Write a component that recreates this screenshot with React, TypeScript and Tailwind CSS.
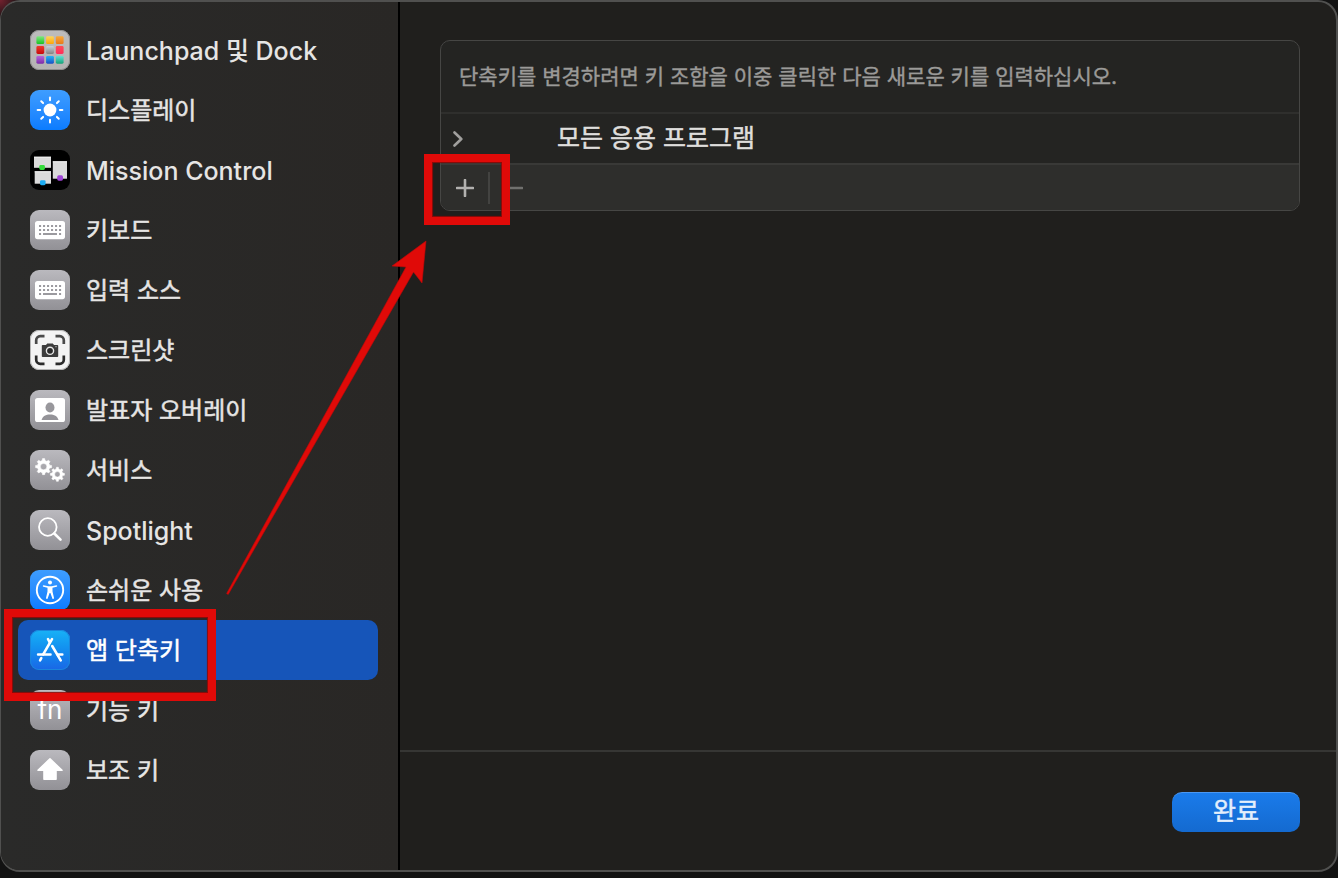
import { useState, type ReactNode } from "react";

function gearPath(cx: number, cy: number, outer: number, inner: number, hole: number) {
  const teeth = 8;
  const step = (Math.PI * 2) / teeth;
  const at = (r: number, a: number) =>
    `${(cx + r * Math.cos(a)).toFixed(2)} ${(cy + r * Math.sin(a)).toFixed(2)}`;
  const points: string[] = [];
  for (let i = 0; i < teeth; i++) {
    const a = i * step;
    points.push(
      at(inner, a - step * 0.3),
      at(outer, a - step * 0.17),
      at(outer, a + step * 0.17),
      at(inner, a + step * 0.3),
    );
  }
  return (
    `M${points.join("L")}Z` +
    `M${cx - hole} ${cy}a${hole} ${hole} 0 1 0 ${hole * 2} 0a${hole} ${hole} 0 1 0 ${-hole * 2} 0Z`
  );
}

const grayTile = "bg-linear-to-b from-[#bab9be] to-[#929196]";
const blueTile = "bg-linear-to-b from-[#3e9dff] to-[#0a7cff]";

function Tile({ className, children }: { className: string; children: ReactNode }) {
  return (
    <span className={`size-10 shrink-0 overflow-hidden rounded-[9px] ${className}`}>
      <svg viewBox="0 0 40 40" className="size-full" aria-hidden="true">
        {children}
      </svg>
    </span>
  );
}

const launchpadColors: [string, string][] = [
  ["#7ee87e", "#18c322"],
  ["#ffd65a", "#fba50a"],
  ["#f9a83a", "#e8791a"],
  ["#f0372c", "#c80c0c"],
  ["#c5ced8", "#858585"],
  ["#ff4a55", "#ff2d5c"],
  ["#b866dd", "#7c2ba8"],
  ["#22b8f5", "#1a4fc4"],
  ["#5fe0d6", "#17a377"],
];

function LaunchpadIcon() {
  return (
    <Tile className="bg-linear-to-b from-[#bdbcbc] to-[#b5b3b3] shadow-[inset_0_0_0_1px_#8f8e8e]">
      <defs>
        {launchpadColors.map(([from, to], i) => (
          <linearGradient key={i} id={`pad${i}`} x1="0" y1="0" x2="0" y2="1">
            <stop offset="0" stopColor={from} />
            <stop offset="1" stopColor={to} />
          </linearGradient>
        ))}
      </defs>
      {launchpadColors.map((_, i) => (
        <rect
          key={i}
          x={6.4 + (i % 3) * 9.7}
          y={6.3 + Math.floor(i / 3) * 9.8}
          width="7.8"
          height="7.8"
          rx="1.4"
          fill={`url(#pad${i})`}
        />
      ))}
    </Tile>
  );
}

function DisplayIcon() {
  return (
    <Tile className={blueTile}>
      <circle cx="20" cy="20" r="6.4" fill="#fff" />
      {[0, 45, 90, 135, 180, 225, 270, 315].map((a) => (
        <path
          key={a}
          d="M20 7.6V10.2"
          stroke="#fff"
          strokeWidth="2"
          strokeLinecap="round"
          transform={`rotate(${a} 20 20)`}
        />
      ))}
    </Tile>
  );
}

function MissionControlIcon() {
  return (
    <Tile className="bg-black">
      <rect x="4" y="6.8" width="17" height="11" fill="#dadada" />
      <rect x="4.7" y="21.3" width="16.3" height="12.4" fill="#dadada" />
      <rect x="22.8" y="11.3" width="14.2" height="17.4" fill="#dadada" />
      <path d="M4 7.2H21M4.7 21.8H21M22.8 11.8H37" stroke="#efefef" />
      <rect x="9.3" y="15" width="5.6" height="5" rx="1.4" fill="#35dc3b" />
      <rect x="10" y="30.2" width="5.6" height="5" rx="1.4" fill="#1cacf2" />
      <rect x="27.2" y="25.3" width="5.8" height="5.4" rx="1.6" fill="#9f45d6" />
    </Tile>
  );
}

function KeyboardIcon() {
  return (
    <Tile className={grayTile}>
      <rect x="5" y="11" width="30" height="18.2" rx="2.6" fill="#fff" />
      <g fill="#9b9a9f">
        {[15, 19].map((y) =>
          [0, 1, 2, 3, 4, 5].map((i) => (
            <rect key={`${y}-${i}`} x={9 + i * 4} y={y} width="2.1" height="2.1" rx="0.3" />
          )),
        )}
        <rect x="9" y="23" width="2.1" height="2.1" rx="0.3" />
        <rect x="13" y="23" width="14" height="2.1" rx="0.3" />
        <rect x="29" y="23" width="2.1" height="2.1" rx="0.3" />
      </g>
    </Tile>
  );
}

function ScreenshotIcon() {
  return (
    <Tile className="bg-[#f3f3f3] shadow-[inset_0_0_0_1px_#b5b5b5]">
      <g fill="none" stroke="#2b2b2b" strokeWidth="2.7">
        <path d="M6.2 14V10.2a4 4 0 0 1 4-4H14.5" stroke="#4a4a4a" />
        <path d="M25.5 6.2H29.8a4 4 0 0 1 4 4V14" stroke="#4a4a4a" />
        <path d="M33.8 25.5V29.8a4 4 0 0 1-4 4H25.5" />
        <path d="M14.5 33.8H10.2a4 4 0 0 1-4-4V25.5" />
      </g>
      <path
        d="M12.6 14.9H16l1.2-1.5h5.6l1.2 1.5h3.4q.8 0 .8.8V26.2q0 .8-.8.8H12.6q-.8 0-.8-.8V15.7q0-.8.8-.8Z"
        fill="#3c3c3c"
      />
      <circle cx="20" cy="20.8" r="3.6" fill="#2a2a2a" stroke="#e6e6e6" strokeWidth="1.4" />
      <circle cx="26" cy="16.7" r="0.6" fill="#ddd" />
    </Tile>
  );
}

function PresenterIcon() {
  return (
    <Tile className={grayTile}>
      <rect x="5" y="8" width="30" height="24" rx="2.6" fill="#fff" />
      <ellipse cx="20" cy="17.5" rx="4.5" ry="5.1" fill="#98979c" />
      <path d="M11.6 30C12.5 26.2 16 24.5 20 24.5S27.5 26.2 28.5 30Z" fill="#949398" />
    </Tile>
  );
}

function ServicesIcon() {
  return (
    <Tile className={grayTile}>
      <g fill="#fff" fillRule="evenodd" stroke="#fff" strokeWidth="0.5" strokeLinejoin="round">
        <path d={gearPath(13.6, 16.6, 8.1, 6.2, 3.2)} />
        <path d={gearPath(27.4, 24.3, 7.1, 5.4, 2.7)} />
      </g>
    </Tile>
  );
}

function SpotlightIcon() {
  return (
    <Tile className={grayTile}>
      <g fill="none" stroke="#fff" strokeLinecap="round">
        <circle cx="17.8" cy="17" r="8.8" strokeWidth="1.8" />
        <path d="M24.3 23.5L30.5 29.7" strokeWidth="2.6" />
      </g>
    </Tile>
  );
}

function AccessibilityIcon() {
  return (
    <Tile className={blueTile}>
      <circle cx="20" cy="20" r="13.2" fill="none" stroke="#fff" strokeWidth="1.9" />
      <circle cx="20" cy="12.5" r="2" fill="#fff" />
      <path
        d="M13.6 15.3L18.4 16.2H21.6L26.4 15.3Q27.2 15.3 27.2 16T26.6 16.8L22.5 17.7V21.5L24 28Q24 28.8 23.3 28.9T22.4 28.4L20.4 23H19.6L17.6 28.4Q17.3 29 16.7 28.9T16 28L17.5 21.5V17.7L13.4 16.8Q12.8 16.7 12.8 16T13.6 15.3Z"
        fill="#fff"
      />
    </Tile>
  );
}

function AppStoreIcon() {
  return (
    <Tile className="bg-linear-to-b from-[#19b2f6] to-[#1a66e6] shadow-[inset_0_0_0_1px_#1a86dd]">
      <g fill="none" stroke="#fff" strokeWidth="2.6" strokeLinecap="round">
        <path d="M22 9.2L13.2 24.3" />
        <path d="M18 9.2L19.8 12.3" />
        <path d="M22.2 16L30.7 30.3" />
        <path d="M11.3 28.2L10.1 30.3" />
        <path d="M8.1 24.5H20.5M27.6 24.5H32.3" />
      </g>
    </Tile>
  );
}

function FunctionKeyIcon() {
  return (
    <span
      aria-hidden="true"
      className={`flex size-10 shrink-0 items-center justify-center rounded-[9px] text-[26px] leading-10 font-normal text-white ${grayTile}`}
    >
      fn
    </span>
  );
}

function ModifierKeyIcon() {
  return (
    <Tile className={grayTile}>
      <path
        d="M20 8.9L32 20.3H26V29.2H14V20.3H8Z"
        fill="#fff"
        stroke="#fff"
        strokeWidth="1.6"
        strokeLinejoin="round"
      />
    </Tile>
  );
}

const categories: { name: string; icon: ReactNode; latin?: boolean }[] = [
  { name: "Launchpad 및 Dock", icon: <LaunchpadIcon />, latin: true },
  { name: "디스플레이", icon: <DisplayIcon /> },
  { name: "Mission Control", icon: <MissionControlIcon />, latin: true },
  { name: "키보드", icon: <KeyboardIcon /> },
  { name: "입력 소스", icon: <KeyboardIcon /> },
  { name: "스크린샷", icon: <ScreenshotIcon /> },
  { name: "발표자 오버레이", icon: <PresenterIcon /> },
  { name: "서비스", icon: <ServicesIcon /> },
  { name: "Spotlight", icon: <SpotlightIcon />, latin: true },
  { name: "손쉬운 사용", icon: <AccessibilityIcon /> },
  { name: "앱 단축키", icon: <AppStoreIcon /> },
  { name: "기능 키", icon: <FunctionKeyIcon /> },
  { name: "보조 키", icon: <ModifierKeyIcon /> },
];

function Sidebar() {
  const [selected, setSelected] = useState("앱 단축키");
  return (
    <nav className="w-[399px] shrink-0 border-r-2 border-black bg-linear-to-r from-[#2a2a29] to-[#292725] pt-[18px] pr-5 pl-[17px]">
      <ul>
        {categories.map(({ name, icon, latin }) => (
          <li key={name}>
            <button
              type="button"
              onClick={() => setSelected(name)}
              className={`flex h-15 w-full items-center gap-4 rounded-[10px] px-3 text-left ${
                name === selected ? "bg-[#1655b9] text-white" : "text-[#e6e5e4]"
              }`}
            >
              {icon}
              <span
                className={
                  latin
                    ? "pt-1 text-[25px] font-medium"
                    : "pt-0.5 text-2xl [-webkit-text-stroke:0.5px]"
                }
              >
                {name}
              </span>
            </button>
          </li>
        ))}
      </ul>
    </nav>
  );
}

function ShortcutList() {
  return (
    <section className="overflow-hidden rounded-[10px] border border-[#464644] bg-[#242422]">
      <p className="px-[18px] py-5 text-[21px] leading-[31px] text-[#9b9a98] [-webkit-text-stroke:0.4px]">
        단축키를 변경하려면 키 조합을 이중 클릭한 다음 새로운 키를 입력하십시오.
      </p>
      <button
        type="button"
        className="flex w-full items-center border-y-2 border-t-[#2f2f2d] border-b-[#393937] pl-3 text-left text-[25px] leading-[49px] text-[#dfdedc] [-webkit-text-stroke:0.5px]"
      >
        <svg viewBox="0 0 10 16" className="mr-[94px] h-4 w-2.5" aria-hidden="true">
          <path
            d="M1.5 1.5L8.3 8L1.5 14.5"
            fill="none"
            stroke="#a09f9d"
            strokeWidth="2.6"
            strokeLinecap="round"
            strokeLinejoin="round"
          />
        </svg>
        모든 응용 프로그램
      </button>
      <div className="flex h-[45px] items-center bg-[#2e2e2c]">
        <button type="button" aria-label="추가" className="flex w-[47px] justify-center">
          <svg viewBox="0 0 18 18" className="size-[18px]" aria-hidden="true">
            <path d="M9 1V17M1 9H17" stroke="#b2b1af" strokeWidth="2.6" strokeLinecap="round" />
          </svg>
        </button>
        <span className="h-8 w-0.5 bg-[#434341]" />
        <button type="button" aria-label="제거" className="flex w-12 justify-center">
          <svg viewBox="0 0 18 18" className="size-[18px]" aria-hidden="true">
            <path d="M1 9H17" stroke="#70706e" strokeWidth="2.6" strokeLinecap="round" />
          </svg>
        </button>
      </div>
    </section>
  );
}

function Annotations() {
  return (
    <div className="pointer-events-none absolute inset-0" aria-hidden="true">
      <div className="absolute top-[609px] left-1 h-[92px] w-[212px] border-8 border-[#e00a08] shadow-[inset_0_0_1px_1px_#900a08]" />
      <div className="absolute top-[154px] left-[424px] h-[71px] w-[86px] border-8 border-[#e00a08] shadow-[inset_0_0_1px_1px_#900a08]" />
      <svg viewBox="0 0 220 370" className="absolute top-[234px] left-[218px] h-[370px] w-[220px]">
        <path
          d="M208 7L204 49L195.5 38L10.2 360.5L8.6 359.5L188 33L174 32Z"
          fill="#e00a08"
          stroke="#c00808"
          strokeWidth="0.6"
        />
      </svg>
    </div>
  );
}

export default function App() {
  return (
    <div className="relative flex min-h-screen flex-col bg-[#121212] bg-[radial-gradient(circle_at_top_left,#74222f_0px,#121212_20px)] pb-1.5 font-['Inter','Noto_Sans_CJK_KR',sans-serif]">
      <div className="flex grow overflow-hidden rounded-[20px] border-2 border-l border-[#50504f] bg-[#201f1d]">
        <Sidebar />
        <main className="flex grow flex-col">
          <div className="grow pt-[38px] pr-9 pl-10">
            <ShortcutList />
          </div>
          <footer className="flex justify-end border-t-2 border-[#363634] pt-10 pr-9 pb-[38px]">
            <button
              type="button"
              className="h-10 w-32 rounded-[10px] border-t border-[#4a97f2] bg-linear-to-b from-[#1a7bea] to-[#146ad0] pb-1 text-[25px] leading-8 text-[#e4effc] [-webkit-text-stroke:0.5px]"
            >
              완료
            </button>
          </footer>
        </main>
      </div>
      <Annotations />
    </div>
  );
}
